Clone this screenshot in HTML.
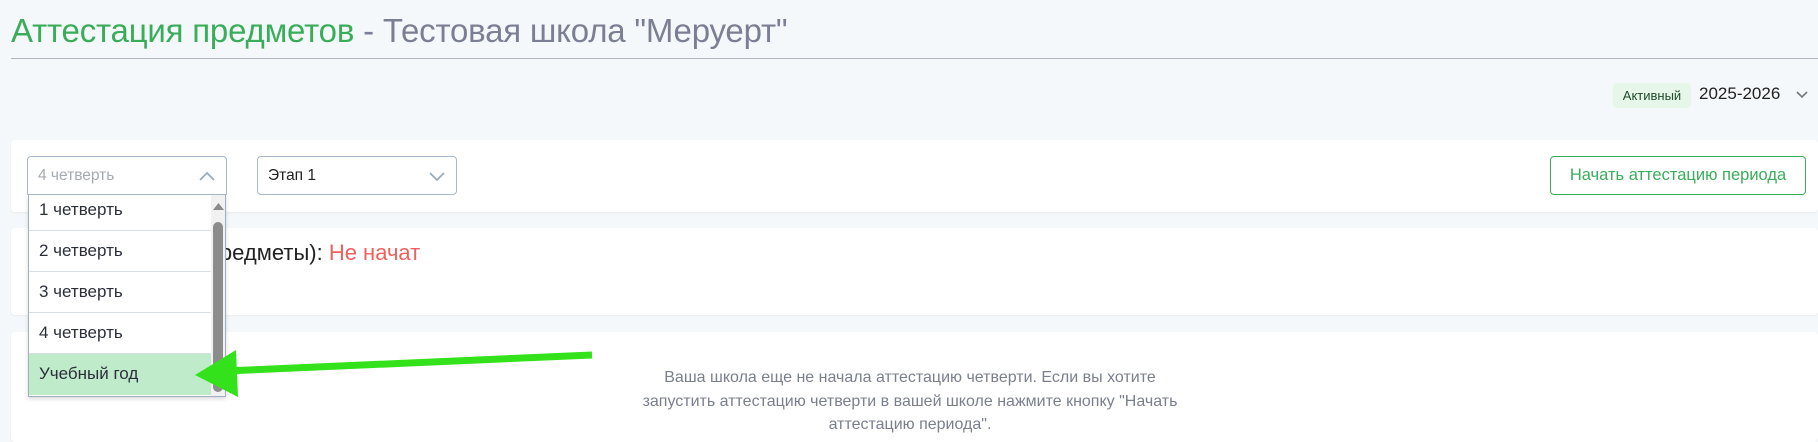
<!DOCTYPE html>
<html><head><meta charset="utf-8"><style>
*{box-sizing:border-box;margin:0;padding:0}
body{width:1818px;height:432px;overflow:hidden;background:#f5f8fb;font-family:"Liberation Sans","DejaVu Sans",sans-serif;position:relative}
.abs{position:absolute}
.card{position:absolute;left:11px;right:0;background:#fff;border-radius:4px;box-shadow:0 1px 2px rgba(0,0,0,.06)}
.sel{position:absolute;height:39px;border:1px solid #a9b8c8;border-radius:4px;background:#fff;font-size:15.5px;padding:0 0 0 10px;line-height:37px}
.item{position:absolute;left:0;width:182px;height:41px;font-size:17px;color:#2b2f3a;padding-left:10px;line-height:40px;border-bottom:1px solid #d8dee6}
</style></head><body>
<div class="abs" style="left:11px;top:12px;font-size:33px;white-space:nowrap;letter-spacing:-0.2px"><span style="color:#3aad5a">Аттестация предметов</span><span style="color:#7b7f93"> - Тестовая школа "Меруерт"</span></div>
<div class="abs" style="left:11px;right:0;top:58px;height:1px;background:#b0b4bf"></div>

<div class="abs" style="left:1613px;top:83px;width:78px;height:25px;background:#e6f6e9;border-radius:4px;font-size:13px;color:#1f4a2b;text-align:center;line-height:25px">Активный</div>
<div class="abs" style="left:1699px;top:84px;font-size:17px;color:#222">2025-2026</div>
<svg class="abs" style="left:1795px;top:90px" width="14" height="10"><path d="M2 2l5 5 5-5" fill="none" stroke="#777" stroke-width="1.6"/></svg>

<div class="card" style="top:140px;height:72px"></div>
<div class="sel" style="left:27px;top:156px;width:200px;color:#a5a9b0;border-bottom-left-radius:0;border-bottom-right-radius:0">4 четверть
<svg class="abs" style="right:10px;top:14px" width="18" height="11"><path d="M2 9l7-7 7 7" fill="none" stroke="#9aacbd" stroke-width="1.8"/></svg></div>
<div class="sel" style="left:257px;top:156px;width:200px;color:#222">Этап 1
<svg class="abs" style="right:10px;top:14px" width="18" height="11"><path d="M2 2l7 7 7-7" fill="none" stroke="#9aacbd" stroke-width="1.8"/></svg></div>
<div class="abs" style="left:1550px;top:156px;width:256px;height:39px;border:1px solid #3aad5a;border-radius:4px;color:#3aad5a;font-size:16.5px;text-align:center;line-height:37px">Начать аттестацию периода</div>

<div class="card" style="top:228px;height:87px"></div>
<div class="abs" style="left:208px;top:240px;font-size:22px;color:#222">предметы): <span style="color:#f0605d">Не начат</span></div>
<div class="card" style="top:332px;height:110px"></div>
<div class="abs" style="left:620px;top:366px;width:580px;text-align:center;font-size:16px;line-height:23.5px;color:#7a7f8c;padding:0 12px">Ваша школа еще не начала аттестацию четверти. Если вы хотите запустить аттестацию четверти в вашей школе нажмите кнопку "Начать аттестацию периода".</div>

<div class="abs" style="left:28px;top:195px;width:198px;height:202px;background:#fff;border:1px solid #9fb0c4;border-top:none;box-shadow:0 2px 4px rgba(0,0,0,.15);overflow:hidden">
<div class="item" style="top:-5px">1 четверть</div>
<div class="item" style="top:36px">2 четверть</div>
<div class="item" style="top:77px">3 четверть</div>
<div class="item" style="top:118px">4 четверть</div>
<div class="item" style="top:159px;background:#c0ebcb;border:none">Учебный год</div>
<div class="abs" style="left:182px;top:0;width:15px;height:202px;background:#f1f1f1"></div>
<svg class="abs" style="left:183px;top:7px" width="13" height="9"><path d="M1 8L6.5 1 12 8z" fill="#8a8a8a"/></svg>
<div class="abs" style="left:184px;top:27px;width:10px;height:170px;background:#8c8c8c;border-radius:5px"></div>
</div>

<svg class="abs" style="left:0;top:0" width="1818" height="432">
<path d="M592 355 L225 371" stroke="#33e21a" stroke-width="7" fill="none"/>
<path d="M195 375 L236 350 L238 397 Z" fill="#33e21a"/>
</svg>
</body></html>
